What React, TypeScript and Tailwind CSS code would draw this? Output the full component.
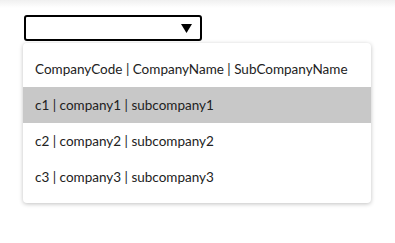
import React from "react";

const rows = [
  "c1 | company1 | subcompany1",
  "c2 | company2 | subcompany2",
  "c3 | company3 | subcompany3",
];

export default function App() {
  return (
    <div
      className="w-[395px] h-[243px] bg-white relative"
      style={{ fontFamily: '"Lato", "Open Sans", sans-serif' }}
    >
      <div className="absolute left-0 top-0 w-full h-[8px] bg-gradient-to-b from-[#f0f0f0] to-white" />
      <div className="relative pt-[15px] pl-[24px]">
        <div className="w-[178px] h-[26px] border-2 border-black rounded-[3px] flex items-center justify-end pr-[8px]">
          <svg width="11" height="9" viewBox="0 0 11 9">
            <polygon points="0,0 11,0 5.5,9" fill="#000" />
          </svg>
        </div>
      </div>
      <div className="absolute left-[23px] top-[43px] w-[348px] bg-white rounded-[4px] shadow-[0_1px_4px_rgba(0,0,0,0.25)] py-[8px] text-[13.5px] text-[#222]">
        <div className="h-[36px] flex items-center pl-[12px]">
          CompanyCode | CompanyName | SubCompanyName
        </div>
        {rows.map((r, i) => (
          <div
            key={r}
            className={`h-[36px] flex items-center pl-[12px] ${i === 0 ? "bg-[#c8c8c8]" : ""}`}
          >
            {r}
          </div>
        ))}
      </div>
    </div>
  );
}
